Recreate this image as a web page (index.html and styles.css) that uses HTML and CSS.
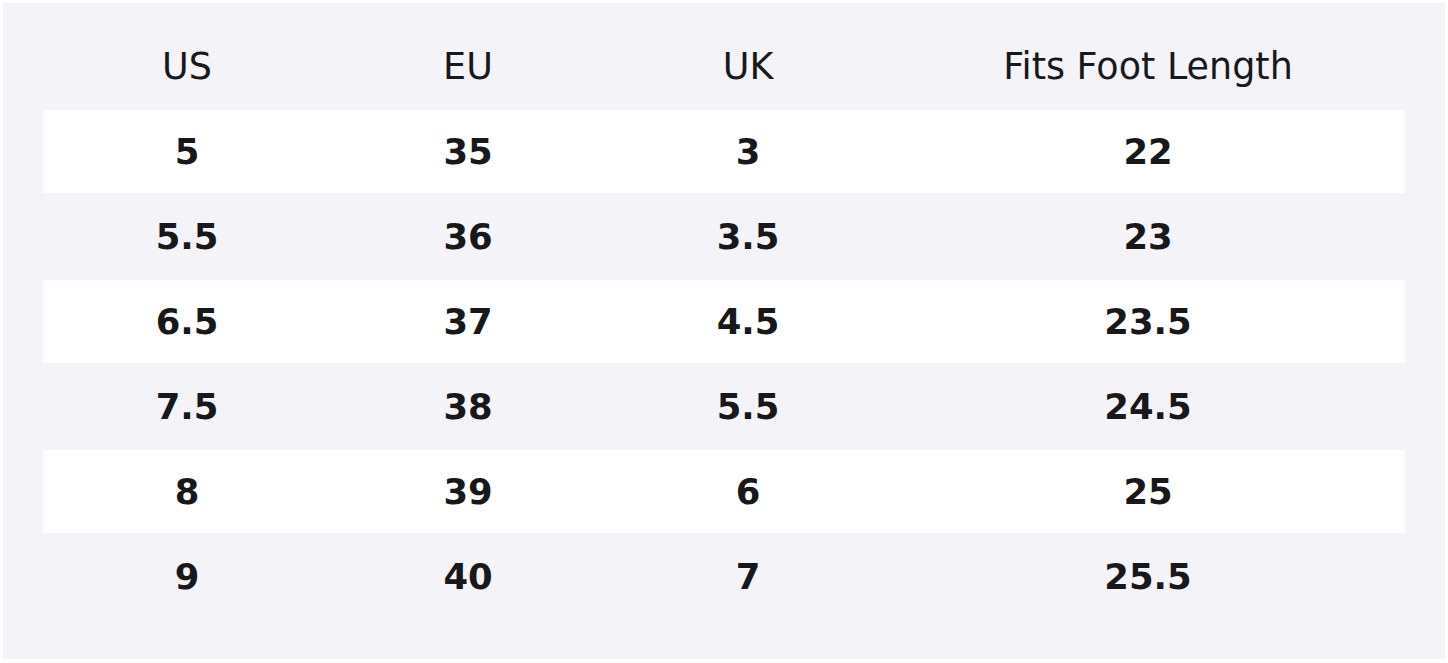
FILE: index.html
```html
<!DOCTYPE html>
<html>
<head>
<meta charset="utf-8">
<link rel="stylesheet" href="styles.css">
</head>
<body>
<div class="chart">
  <div class="row head">
    <div class="cell">US</div><div class="cell">EU</div><div class="cell">UK</div><div class="cell">Fits Foot Length</div>
  </div>
  <div class="row odd"><div class="cell">5</div><div class="cell">35</div><div class="cell">3</div><div class="cell">22</div></div>
  <div class="row"><div class="cell">5.5</div><div class="cell">36</div><div class="cell">3.5</div><div class="cell">23</div></div>
  <div class="row odd"><div class="cell">6.5</div><div class="cell">37</div><div class="cell">4.5</div><div class="cell">23.5</div></div>
  <div class="row"><div class="cell">7.5</div><div class="cell">38</div><div class="cell">5.5</div><div class="cell">24.5</div></div>
  <div class="row odd"><div class="cell">8</div><div class="cell">39</div><div class="cell">6</div><div class="cell">25</div></div>
  <div class="row"><div class="cell">9</div><div class="cell">40</div><div class="cell">7</div><div class="cell">25.5</div></div>
</div>
</body>
</html>
```
FILE: styles.css
```css
html, body {
  margin: 0;
  padding: 0;
  background: #ffffff;
}
body {
  padding: 3px;
  font-family: "DejaVu Sans", sans-serif;
  color: #18181b;
}
.chart {
  background: #f3f3f8;
  width: 1442px;
  height: 656px;
  box-sizing: border-box;
  padding: 40px 40px 0 40px;
  display: flex;
  flex-direction: column;
  gap: 2px;
}
.row {
  display: grid;
  grid-template-columns: 288px 274px 286px 1fr;
  height: 83px;
  align-items: center;
  font-weight: bold;
  font-size: 35.4px;
}
.row.odd {
  background: #ffffff;
}
.row.head {
  height: 65px;
  align-items: start;
  font-weight: normal;
  font-size: 36.5px;
}
.head .cell {
  padding-top: 2px;
}
.cell {
  text-align: center;
}
```
